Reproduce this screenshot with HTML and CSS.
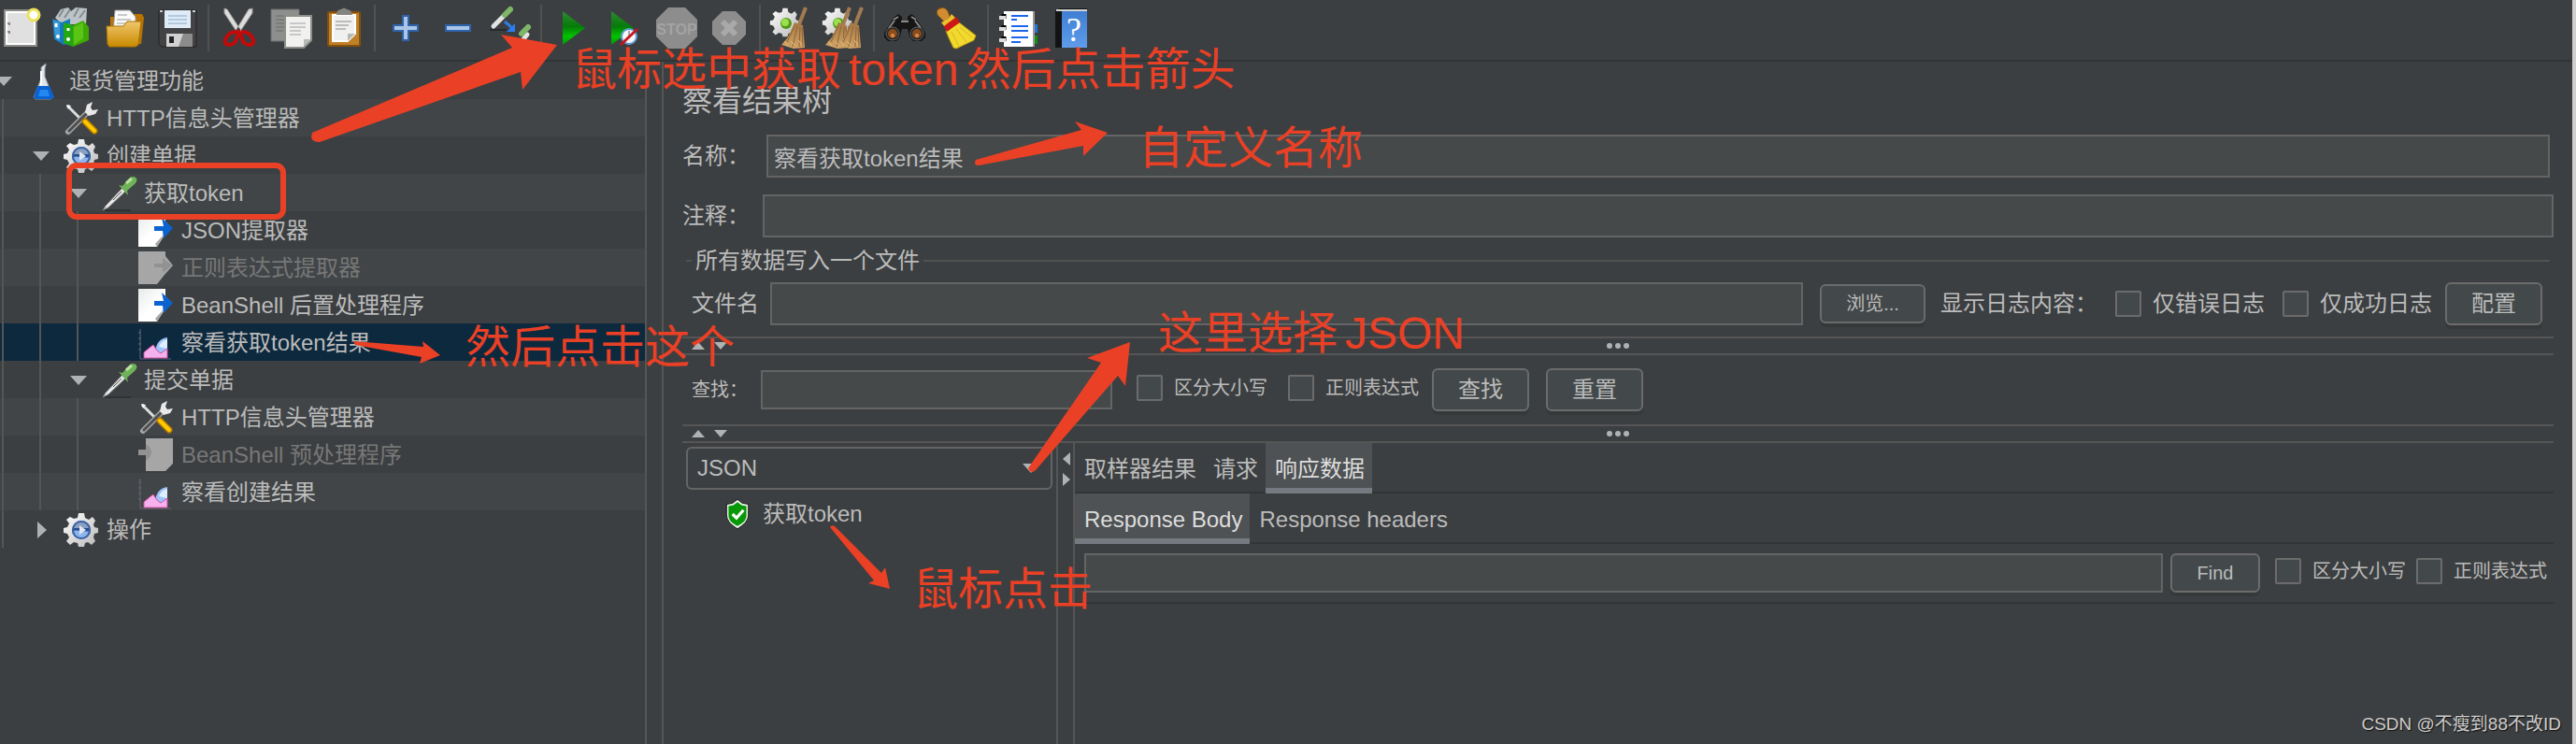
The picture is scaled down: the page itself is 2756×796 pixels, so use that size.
FILE: index.html
```html
<!DOCTYPE html>
<html lang="zh-CN">
<head>
    <meta charset="UTF-8">
    <meta name="viewport" content="width=device-width, initial-scale=1.0">
    <title>察看结果树</title>
    <link rel="stylesheet" href="styles.css">
</head>
<body>
    <!-- shared icons -->
    <svg class="defs" width="0" height="0">
        <defs>
            <linearGradient id="gold" x1="0" y1="0" x2="0" y2="1"><stop offset="0" stop-color="#f0c66c"/><stop offset="1" stop-color="#c98a00"/></linearGradient>
            <linearGradient id="steel" x1="0" y1="0" x2="1" y2="1"><stop offset="0" stop-color="#fff"/><stop offset="1" stop-color="#b8b8b8"/></linearGradient>
            <linearGradient id="green" x1="0" y1="0" x2="0" y2="1"><stop offset="0" stop-color="#2f8a35"/><stop offset=".45" stop-color="#067a08"/><stop offset=".75" stop-color="#00c400"/><stop offset="1" stop-color="#079307"/></linearGradient>
            <linearGradient id="blue" x1="0" y1="0" x2="0" y2="1"><stop offset="0" stop-color="#3f7ed2"/><stop offset="1" stop-color="#5f9ceb"/></linearGradient>
            <linearGradient id="paper" x1="0" y1="0" x2="1" y2="1"><stop offset="0" stop-color="#e8eaea"/><stop offset=".5" stop-color="#fff"/></linearGradient>
            <linearGradient id="straw" x1="0" y1="0" x2="0" y2="1"><stop offset="0" stop-color="#a47745"/><stop offset="1" stop-color="#d2a465"/></linearGradient>
        </defs>
        <symbol id="down" viewBox="0 0 18 10"><path d="M0 0H18L9 10Z" fill="#afb1b3"/></symbol>
        <symbol id="right" viewBox="0 0 10 18"><path d="M0 0L10 9L0 18Z" fill="#afb1b3"/></symbol>
        <symbol id="cog" viewBox="0 0 40 40">
            <path d="M17 2h6l1 5 4 2 4-3 3 4-2 4 1 3 4 1v5l-4 1-1 4 2 4-4 4-4-3-3 1-1 4h-6l-1-4-4-1-4 3-4-4 3-4-2-4-4-1v-5l4-1 2-4-3-4 4-3 4 2 4-1z" fill="url(#steel)"/>
        </symbol>
        <symbol id="flask" viewBox="0 0 40 40">
            <path d="M17 5l5-4v2l-1 3v9l9 22-3 2H11l-2-2 8-20z" fill="#dfe4ea" stroke="#8d949d"/>
            <path d="M13 25h13l5 12-3 2H11l-2-2z" fill="#0b63cf"/>
            <path d="M16 29h8l2 7H14z" fill="#2388f2"/>
            <path d="M17 9v15" stroke="#fff" stroke-width="2"/>
        </symbol>
        <symbol id="tools" viewBox="0 0 40 40">
            <path d="M5 6L22 23" stroke="#ddd" stroke-width="3"/>
            <path d="M4 5l5 1-3 4z" fill="#f5f5f5"/>
            <path d="M6 34L26 14" stroke="#a6a6a6" stroke-width="6" stroke-linecap="round"/>
            <path d="M7 33L25 15" stroke="#4e4e4e" stroke-width="3" stroke-linecap="round"/>
            <path d="M24 13l2-8 6-3-2 6 2 3 6-1-3 5-7 2z" fill="#e9e9e9"/>
            <path d="M24 23L34 33" stroke="#b47c00" stroke-width="7" stroke-linecap="round"/>
            <path d="M24 23L34 33" stroke="#ffc800" stroke-width="4" stroke-linecap="round"/>
        </symbol>
        <symbol id="group" viewBox="0 0 40 40">
            <use href="#cog"/>
            <circle cx="20" cy="20" r="10" fill="#244c8f"/><path d="M11 21a9 9 0 0018 0c-5 2-13-2-18 0" fill="#8fb6ec"/><path d="M12 18a8 8 0 0116 0z" fill="#8b9fbf"/>
            <circle cx="20" cy="20" r="9" fill="none" stroke="#3b64a6" stroke-width="2"/>
            <path d="M18 15L25 20L18 25Z" fill="#dfe7f1"/>
        </symbol>
        <symbol id="dropper" viewBox="0 0 40 40">
            <path d="M5 38h28" stroke="#2f3133" stroke-width="2"/>
            <path d="M24 14L6 33l-3 5 6-3L27 18z" fill="#e8e8e8" stroke="#777"/>
            <path d="M14 27l9-9" stroke="#555"/>
            <path d="M20 11l4 1 8-9c3-2 6-1 7 1s0 4-2 6l-8 7 1 5z" fill="#6fb259"/>
            <path d="M28 9l6-5" stroke="#b9e2a0" stroke-width="3"/>
        </symbol>
        <symbol id="post" viewBox="0 0 40 40">
            <path d="M1 2H30v8l7 7-9 9-7 11H1V2z" fill="url(#paper)"/>
            <path d="M30 22L21 37 19 34z" fill="#a5a5a5"/>
            <path d="M18 15h10l-2-9 12 11-10 11-1-8h-9z" fill="#0b63cf"/>
        </symbol>
        <symbol id="post-off" viewBox="0 0 40 40">
            <path d="M1 2H30v5l8 10-9 10-8 10H1z" fill="#a6a6a6"/>
            <path d="M18 15h9V9l10 8-10 8v-6h-9z" fill="#929292"/>
        </symbol>
        <symbol id="pre-off" viewBox="0 0 40 40">
            <path d="M9 2H38V29L30 37H9V20H1v-6h8z" fill="#a6a6a6"/>
            <path d="M9 8q6 4 6 9t-6 9v-6H1v-6h8z" fill="#929292"/>
        </symbol>
        <symbol id="chart" viewBox="0 0 40 40">
            <path d="M3 5V37H36" fill="none" stroke="#667" stroke-width="1"/>
            <path d="M1 9h3M1 15h3M1 21h3M1 27h3" stroke="#667"/>
            <path d="M20 36V24q3-9 12-10V36z" fill="#9cc4f8"/><path d="M23 24q3-7 9-8v10z" fill="#deeeff"/>
            <path d="M7 36V30l6-5 4-3 4 6 4 3 7-5V36z" fill="#f5b0ee" stroke="#d052a4"/>
        </symbol>
        <symbol id="shield" viewBox="0 0 32 32">
            <path d="M16 1l5 4 6 1v11c0 6-4 10-11 14C9 27 5 23 5 17V6l6-1z" fill="#e8efe8" stroke="#222" />
            <path d="M16 4l4 3 5 1v9c0 5-3 8-9 11-6-3-9-6-9-11V8l5-1z" fill="#069806"/>
            <path d="M11 16l4 4 7-8" fill="none" stroke="#fff" stroke-width="3"/>
        </symbol>
        <symbol id="cog-clear" viewBox="0 0 56 64">
            <use href="#cog" x="5" y="7" width="34" height="34"/>
            <circle cx="23" cy="25" r="6" fill="#4f9a18"/><circle cx="22" cy="24" r="4" fill="#9be04e"/>
        </symbol>
        <symbol id="besom" viewBox="0 0 30 46">
            <path d="M20 19L27 1" stroke="#a17b50" stroke-width="4"/>
            <path d="M15 17l9 3 2 24-12 1-13-4 7-8z" fill="url(#straw)"/>
            <path d="M15 21L7 38M18 21l-5 22M21 22l-1 21M23 22l1 21" stroke="#8d6438"/>
            <path d="M4 37l4 5M11 37l5 5M19 36l4 5" stroke="#e3bd81"/>
        </symbol>
    </svg>

    <div class="app">
        <div class="toolbar">
            <button type="button" class="tool" aria-label="新建">
                <svg viewBox="0 0 56 64"><rect x="11" y="11" width="34" height="38" fill="#e0e0e1" stroke="#8b8c88" stroke-width="2"/><rect x="13" y="13" width="30" height="34" fill="none" stroke="#fff" stroke-width="2"/><path d="M14 25h2v2M14 34h2v2" stroke="#888" stroke-width="2" fill="none"/><circle cx="42" cy="16" r="6" fill="#fff" stroke="#ece25a" stroke-width="3"/></svg>
            </button>
            <button type="button" class="tool" aria-label="模板">
                <svg viewBox="0 0 56 64"><path d="M9 19l6-9 8-2 3 4 5-4 12 1-1 17H16z" fill="#bcc4c7"/><path d="M13 18l5-8M19 19l6-9M29 18l5-9M35 19l6-8" stroke="#858d91" stroke-width="2"/><path d="M6 20l10 4 9-4v27l-7 1-10-6z" fill="#1479bd"/><path d="M7 21l7 3v20l-5-3z" fill="#3c9cda"/><path d="M18 24l10 3v23l-10-4z" fill="#22a713"/><path d="M28 27l11-5 6 7v14L28 50z" fill="#3faa06"/><path d="M29 29l10-5v17l-10 7z" fill="#5bc515"/><path d="M10 25v4M23 30v3" stroke="#fff" stroke-width="3"/><circle cx="12" cy="39" r="2" fill="#fff"/><circle cx="23" cy="42" r="2" fill="#fff"/></svg>
            </button>
            <button type="button" class="tool" aria-label="打开">
                <svg viewBox="0 0 56 64"><path d="M12 18h7v-3h27l2 4-3 28H12z" fill="#b87400"/><path d="M17 11h16l6 7v16H15z" fill="#fafafa" stroke="#999"/><path d="M20 16h10M19 21h15M19 25h15" stroke="#999"/><path d="M8 28h18l4-5h15l-3 25-3 2H11l-2-3z" fill="url(#gold)" stroke="#a97300"/></svg>
            </button>
            <button type="button" class="tool" aria-label="保存">
                <svg viewBox="0 0 56 64"><path d="M8 11h40v39H11l-3-3z" fill="#434345" stroke="#222"/><path d="M14 11h28v19H14z" fill="#dfebf7"/><path d="M18 17h20M18 21h20M18 25h20" stroke="#86a7c5"/><path d="M16 36h28v14H16z" fill="#d1d1d1"/><path d="M19 39h5v7h-5z" fill="#222"/><path d="M34 36h10v14H29z" fill="#8b8b8b"/><path d="M9 12h3M44 12h3" stroke="#ccc" stroke-width="2"/></svg>
            </button>
            <span class="tool-sep"></span>
            <button type="button" class="tool" aria-label="剪切">
                <svg viewBox="0 0 56 64"><path d="M12 9l3 1 15 23-4 2L12 14zM42 9l-4 1-14 23 4 2 14-21z" fill="#ddd" stroke="#999"/><path d="M26 34q-8 0-11 5c-4 5-2 9 2 9s8-3 8-7l3-6 3 6c0 4 4 7 8 7s6-4 2-9q-3-5-11-5" fill="none" stroke="#c20a0a" stroke-width="4"/></svg>
            </button>
            <button type="button" class="tool" aria-label="复制">
                <svg viewBox="0 0 56 64"><path d="M6 10h30v34H6z" fill="#8c8f8e" stroke="#6c6f6f"/><path d="M11 17h16M11 21h10M11 25h10M11 29h10M11 33h8" stroke="#686b6b"/><path d="M21 17h28v26l-8 8H21z" fill="#f1f1f0" stroke="#8d9089" stroke-width="2"/><path d="M41 50v-8h7z" fill="#b7bab5"/><path d="M26 25h17M26 29h17M26 33h12M26 37h12" stroke="#9d9f9d"/></svg>
            </button>
            <button type="button" class="tool" aria-label="粘贴">
                <svg viewBox="0 0 56 64"><rect x="11" y="13" width="34" height="36" rx="1" fill="#c08028" stroke="#85500c" stroke-width="2"/><path d="M16 16h24v20l-8 8H16z" fill="#f0f0ef" stroke="#fff" stroke-width="2"/><path d="M32 44v-8h8z" fill="#b5b8b4"/><path d="M19 23h17M19 27h14M19 31h11" stroke="#888"/><path d="M20 16q0-6 5-6 3-3 6 0 5 0 6 6z" fill="#858580"/></svg>
            </button>
            <span class="tool-sep"></span>
            <button type="button" class="tool" aria-label="展开">
                <svg viewBox="0 0 56 64"><path d="M25 17h6v10h10v6H31v10h-6V33H15v-6h10z" fill="#a9c6e8" stroke="#2f63ab" stroke-width="2"/></svg>
            </button>
            <button type="button" class="tool" aria-label="折叠">
                <svg viewBox="0 0 56 64"><path d="M15 27h26v6H15z" fill="#a9c6e8" stroke="#2f63ab" stroke-width="2"/></svg>
            </button>
            <button type="button" class="tool" aria-label="切换">
                <svg viewBox="0 0 56 64"><path d="M6 32h18" stroke="#292b2c" stroke-width="2"/><path d="M10 28L21 17M37 48l9-11" stroke="#e2e2e2" stroke-width="5" stroke-linecap="round"/><path d="M22 16l6-6M40 36l7-7" stroke="#7fb568" stroke-width="6" stroke-linecap="round"/><path d="M22 23l7 6" stroke="#2f7de3" stroke-width="3"/><path d="M33 25v9h-9z" fill="#2a7bf0"/></svg>
            </button>
            <span class="tool-sep"></span>
            <button type="button" class="tool" aria-label="启动">
                <svg viewBox="0 0 56 64"><path d="M18 12L42 30L18 48Z" fill="url(#green)"/></svg>
            </button>
            <button type="button" class="tool" aria-label="不停顿开始">
                <svg viewBox="0 0 56 64"><path d="M14 12L38 30L14 48Z" fill="url(#green)"/><circle cx="33" cy="39" r="8" fill="#f3f6fb" stroke="#5f9bd0" stroke-width="2"/><path d="M33 33v6" stroke="#555"/><path d="M24 48L42 31" stroke="#c8141e" stroke-width="3"/></svg>
            </button>
            <button type="button" class="tool" aria-label="停止" disabled>
                <svg viewBox="0 0 56 64"><path d="M19 8h18l13 13v18L37 52H19L6 39V21z" fill="#8d8d8d"/><text x="28" y="37" text-anchor="middle" class="stop-text">STOP</text></svg>
            </button>
            <button type="button" class="tool" aria-label="关闭" disabled>
                <svg viewBox="0 0 56 64"><path d="M21 12h14l11 11v14L35 48H21L10 37V23z" fill="#8d8d8d"/><path d="M21 23l14 14M35 23L21 37" stroke="#a9a9a9" stroke-width="6"/></svg>
            </button>
            <span class="tool-sep"></span>
            <button type="button" class="tool" aria-label="清除">
                <svg viewBox="0 0 56 64"><use href="#cog-clear"/><use href="#besom" x="17" y="7" width="30" height="46"/></svg>
            </button>
            <button type="button" class="tool" aria-label="清除全部">
                <svg viewBox="0 0 56 64"><use href="#cog-clear"/><use href="#besom" x="8" y="7" width="30" height="46"/><use href="#besom" x="21" y="7" width="30" height="46"/></svg>
            </button>
            <span class="tool-sep"></span>
            <button type="button" class="tool" aria-label="查找">
                <svg viewBox="0 0 56 64"><path d="M17 18l4-3 4 3v4h6v-4l4-3 4 3 11 17v5l-4 4h-9l-4-5-2-8h-6l-2 8-4 5h-9l-4-4v-5z" fill="#151515"/><path d="M16 21l5-3M40 21l-5-3M24 23h8M11 30l6-8M45 30l-6-8" stroke="#888" stroke-width="2"/><circle cx="15" cy="36" r="7" fill="#262626" stroke="#666"/><circle cx="41" cy="36" r="7" fill="#262626" stroke="#666"/><circle cx="15" cy="36" r="5" fill="#8a4c1c"/><circle cx="41" cy="36" r="5" fill="#8a4c1c"/><circle cx="15" cy="38" r="2" fill="#d98e4d"/><circle cx="41" cy="38" r="2" fill="#d98e4d"/></svg>
            </button>
            <button type="button" class="tool" aria-label="重置查找">
                <svg viewBox="0 0 56 64"><path d="M7 16q-2-6 3-7 5-2 8 3l3 8-6 4z" fill="#cf8c30" stroke="#8b5512"/><path d="M11 24l8-4 3-5 5 5 2 7-11 6z" fill="#e8c22b"/><path d="M16 33l14-9 18 14-2 5-19 9-3-1q-5-10-8-18z" fill="#f2d92d" stroke="#b89a10"/><path d="M14 28l13-10 4 6-14 10z" fill="#cd1717"/><path d="M22 34l8 16M27 31l11 14M31 29l13 11" stroke="#d5b824" stroke-width="1"/></svg>
            </button>
            <span class="tool-sep"></span>
            <button type="button" class="tool" aria-label="函数助手">
                <svg viewBox="0 0 56 64"><path d="M40 26h8v9h-8z" fill="#2675d8"/><path d="M40 38h8v9h-8z" fill="#128e12"/><path d="M12 12h32v38H12z" fill="#fff"/><path d="M44 12v38" stroke="#999" stroke-width="2"/><path d="M12 15v5M12 27v5M12 39v5" stroke="#000" stroke-width="5"/><path d="M7 19h7M7 31h7M7 43h7" stroke="#ddd" stroke-width="4"/><path d="M20 17h18M20 21h6M20 28h18M20 33h18M20 40h18M20 45h10" stroke="#1c66ee" stroke-width="2"/></svg>
            </button>
            <button type="button" class="tool" aria-label="帮助">
                <svg viewBox="0 0 56 64"><path d="M11 11l5-2h29v42H11z" fill="#131313"/><path d="M12 11h33" stroke="#d4d4d4" stroke-width="2"/><path d="M18 12h27v39H18z" fill="url(#blue)"/><text x="31" y="44" text-anchor="middle" class="help-text">?</text></svg>
            </button>
        </div>

        <div class="workspace">
            <ul class="tree">
                <li class="row"><span class="toggle"><svg class="open"><use href="#down"/></svg></span><svg class="icon"><use href="#flask"/></svg>退货管理功能</li>
                <li class="row"><i class="guide"></i><span class="toggle"></span><svg class="icon"><use href="#tools"/></svg>HTTP信息头管理器</li>
                <li class="row"><i class="guide"></i><span class="toggle"><svg class="open"><use href="#down"/></svg></span><svg class="icon"><use href="#group"/></svg>创建单据</li>
                <li class="row"><i class="guide"></i><i class="guide"></i><span class="toggle"><svg class="open"><use href="#down"/></svg></span><svg class="icon"><use href="#dropper"/></svg>获取token</li>
                <li class="row"><i class="guide"></i><i class="guide"></i><i class="guide"></i><span class="toggle"></span><svg class="icon"><use href="#post"/></svg>JSON提取器</li>
                <li class="row disabled"><i class="guide"></i><i class="guide"></i><i class="guide"></i><span class="toggle"></span><svg class="icon"><use href="#post-off"/></svg>正则表达式提取器</li>
                <li class="row"><i class="guide"></i><i class="guide"></i><i class="guide"></i><span class="toggle"></span><svg class="icon"><use href="#post"/></svg>BeanShell 后置处理程序</li>
                <li class="row selected"><i class="guide"></i><i class="guide"></i><i class="guide"></i><span class="toggle"></span><svg class="icon"><use href="#chart"/></svg>察看获取token结果</li>
                <li class="row"><i class="guide"></i><i class="guide"></i><span class="toggle"><svg class="open"><use href="#down"/></svg></span><svg class="icon"><use href="#dropper"/></svg>提交单据</li>
                <li class="row"><i class="guide"></i><i class="guide"></i><i class="guide"></i><span class="toggle"></span><svg class="icon"><use href="#tools"/></svg>HTTP信息头管理器</li>
                <li class="row disabled"><i class="guide"></i><i class="guide"></i><i class="guide"></i><span class="toggle"></span><svg class="icon"><use href="#pre-off"/></svg>BeanShell 预处理程序</li>
                <li class="row"><i class="guide"></i><i class="guide"></i><i class="guide"></i><span class="toggle"></span><svg class="icon"><use href="#chart"/></svg>察看创建结果</li>
                <li class="row"><i class="guide"></i><span class="toggle"><svg class="closed"><use href="#right"/></svg></span><svg class="icon"><use href="#group"/></svg>操作</li>
            </ul>

            <div class="editor">
                <h1>察看结果树</h1>
                <div class="field-row inset">
                    <label for="name">名称<span class="colon">：</span></label>
                    <input type="text" id="name" value="察看获取token结果">
                </div>
                <div class="field-row">
                    <label for="comment">注释<span class="colon">：</span></label>
                    <input type="text" id="comment">
                </div>
                <fieldset>
                    <legend>所有数据写入一个文件</legend>
                    <div class="file-row">
                        <label for="file" class="file-label">文件名</label>
                        <input type="text" id="file">
                        <button type="button" class="btn small browse">浏览...</button>
                        <span class="log-label">显示日志内容<span class="colon">：</span></span>
                        <label class="check"><input type="checkbox">仅错误日志</label>
                        <label class="check"><input type="checkbox">仅成功日志</label>
                        <button type="button" class="btn config">配置</button>
                    </div>
                </fieldset>

                <div class="splitter">
                    <svg class="arrows" viewBox="0 0 40 8"><path d="M0 8L7 0L14 8Z" fill="#afb1b3"/><path d="M24 0H38L31 8Z" fill="#afb1b3"/></svg>
                    <svg class="dots" viewBox="0 0 26 8"><g fill="#afb1b3"><circle cx="4" cy="4" r="3"/><circle cx="13" cy="4" r="3"/><circle cx="22" cy="4" r="3"/></g></svg>
                </div>

                <div class="search-row">
                    <label for="search">查找<span class="colon">：</span></label>
                    <input type="text" id="search" class="short">
                    <label class="check small"><input type="checkbox">区分大小写</label>
                    <label class="check small"><input type="checkbox">正则表达式</label>
                    <button type="button" class="btn">查找</button>
                    <button type="button" class="btn reset">重置</button>
                </div>

                <div class="splitter">
                    <svg class="arrows" viewBox="0 0 40 8"><path d="M0 8L7 0L14 8Z" fill="#afb1b3"/><path d="M24 0H38L31 8Z" fill="#afb1b3"/></svg>
                    <svg class="dots" viewBox="0 0 26 8"><g fill="#afb1b3"><circle cx="4" cy="4" r="3"/><circle cx="13" cy="4" r="3"/><circle cx="22" cy="4" r="3"/></g></svg>
                </div>

                <div class="results">
                    <div class="samples">
                        <div class="combo">
                            <select aria-label="渲染器"><option>JSON</option></select>
                            <svg viewBox="0 0 18 10"><use href="#down"/></svg>
                        </div>
                        <div class="sample"><svg><use href="#shield"/></svg>获取token</div>
                    </div>
                    <div class="divider">
                        <svg viewBox="0 0 10 36"><path d="M9 0V14L1 7Z" fill="#afb1b3"/><path d="M1 22V36L9 29Z" fill="#afb1b3"/></svg>
                    </div>
                    <div class="response">
                        <div class="tabs">
                            <button type="button" class="tab">取样器结果</button>
                            <button type="button" class="tab">请求</button>
                            <button type="button" class="tab active">响应数据</button>
                        </div>
                        <div class="tabs">
                            <button type="button" class="tab active">Response Body</button>
                            <button type="button" class="tab">Response headers</button>
                        </div>
                        <div class="find-row">
                            <input type="text" class="short" aria-label="Find">
                            <button type="button" class="btn small find">Find</button>
                            <label class="check small"><input type="checkbox">区分大小写</label>
                            <label class="check small"><input type="checkbox">正则表达式</label>
                        </div>
                    </div>
                </div>
            </div>
        </div>

        <!-- notes drawn over the window -->
        <div class="notes">
            <svg width="1300" height="700">
                <rect x="74" y="177" width="229" height="55" rx="8" fill="none" stroke="#ea4025" stroke-width="6"/>
                <g fill="#ea4025">
                    <path d="M334 142L548 51L536 37L596 48L559 96L557 77L342 152Q334 152 333 147Z"/>
                    <path d="M1044 171L1157 139L1150 130L1185 142L1159 167L1159 156L1047 177Q1041 177 1044 171Z"/>
                    <path d="M378 365L453 371L452 365L471 380L449 389L451 382L380 369Z"/>
                    <path d="M1100 501L1178 388L1163 383L1209 366L1204 413L1196 402L1108 503Q1103 508 1100 501Z"/>
                    <path d="M888 564Q890 561 893 563L943 613L947 607L952 630L929 624L935 621Z"/>
                </g>
            </svg>
            <p class="note note-start">鼠标选中获取<span>token</span>然后点击箭头</p>
            <p class="note note-name">自定义名称</p>
            <p class="note note-format">这里选择<span>JSON</span></p>
            <p class="note note-node">然后点击这个</p>
            <p class="note note-click">鼠标点击</p>
            <p class="credit">CSDN @不瘦到88不改ID</p>
        </div>
    </div>
</body>
</html>
```
FILE: styles.css
```css
* {
    box-sizing: border-box;
}

body {
    margin: 0;
    background-color: #3c3f41;
    color: #bbb;
    font-family: "Liberation Sans", "Noto Sans CJK SC", sans-serif;
    font-size: 24px;
    line-height: 30px;
}

input,
button,
select {
    font: inherit;
    color: inherit;
    margin: 0;
}

.defs {
    position: absolute;
}

.app {
    position: relative;
    display: flex;
    flex-direction: column;
    min-height: 100vh;
    overflow: hidden;
    border-right: 4px solid #cfcfcf;
}

/* toolbar */
.toolbar {
    display: flex;
    align-items: center;
    margin-left: -6px;
    border-bottom: 2px solid #323536;
}

.tool {
    width: 56px;
    height: 64px;
    padding: 0;
    border: 0;
    background: none;
}

.tool svg {
    display: block;
    width: 56px;
    height: 64px;
}

.tool-sep {
    width: 2px;
    height: 50px;
    margin: 0 4px 4px;
    background-color: #515151;
}

.stop-text {
    font-size: 16px;
    font-weight: bold;
    fill: #a3a3a3;
}

.help-text {
    font-family: "Liberation Serif", serif;
    font-size: 36px;
    fill: #fff;
}

.workspace {
    display: flex;
    flex: 1;
}

/* test plan tree */
.tree {
    width: 692px;
    margin: 0;
    padding: 0;
    list-style: none;
    border-right: 2px solid #555;
}

.row {
    display: flex;
    align-items: center;
    height: 40px;
    padding-top: 2px;
    white-space: pre;
}

.row:nth-child(even) {
    background-color: #414547;
}

.row.selected {
    background-color: #0d293e;
}

.row.disabled {
    color: #777;
}

.guide {
    width: 40px;
    height: 40px;
    margin-top: -2px;
    background: linear-gradient(#555, #555) 2px 0 / 2px 100% no-repeat;
}

.toggle {
    display: flex;
    width: 27px;
}

.toggle .open {
    width: 18px;
    height: 10px;
    margin-left: -5px;
}

.toggle .closed {
    width: 10px;
    height: 18px;
}

.icon {
    width: 40px;
    height: 40px;
    margin-right: 7px;
}

/* editor panel */
.editor {
    flex: 1;
    display: flex;
    flex-direction: column;
    margin-left: 16px;
    padding: 22px 20px 0;
    border-left: 2px solid #555;
}

h1 {
    margin: 0 0 16px;
    font-size: 32px;
    line-height: 40px;
    font-weight: normal;
}

input[type="text"] {
    flex: 1;
    min-width: 0;
    height: 46px;
    padding: 0 6px;
    border: 2px solid #646464;
    background-color: #45494a;
}

input[type="text"].short {
    height: 42px;
}

/* full-width colon sits in the middle of its box */
.colon {
    font-family: "Noto Sans CJK TC", sans-serif;
    line-height: 1;
}

.field-row {
    display: flex;
    align-items: center;
    margin-bottom: 18px;
}

.field-row label {
    width: 86px;
}

.field-row.inset input {
    margin: 0 4px;
}

fieldset {
    margin: -8px 4px 12px;
    padding: 8px 8px 0 6px;
    border: 0;
    border-top: 2px solid #515151;
}

legend {
    padding: 0 4px;
}

.file-row,
.search-row,
.find-row {
    display: flex;
    align-items: center;
}

.file-label {
    width: 84px;
}

.log-label {
    margin-left: 16px;
}

.check {
    display: flex;
    align-items: center;
    gap: 12px;
    margin-left: 19px;
}

.check.small {
    font-size: 20px;
}

input[type="checkbox"] {
    appearance: none;
    width: 28px;
    height: 28px;
    border: 2px solid #6b6b6b;
    border-radius: 2px;
    background-color: #43494a;
}

.btn {
    width: 104px;
    height: 46px;
    padding: 0;
    border: 2px solid #6b6b6b;
    border-radius: 6px;
    background-color: #43494a;
    box-shadow: 0 4px 0 #36393a;
}

.btn.small {
    height: 42px;
    font-size: 20px;
}

.btn.browse {
    width: 113px;
    margin-left: 18px;
}

.btn.config {
    margin-left: 14px;
}

.splitter {
    display: flex;
    align-items: center;
    height: 20px;
    padding: 0 50px 0 10px;
    border-top: 2px solid #555;
    border-bottom: 2px solid #555;
}

.arrows {
    width: 40px;
    height: 8px;
}

.dots {
    width: 26px;
    height: 8px;
    margin: 0 auto;
}

.search-row {
    height: 74px;
    padding-left: 10px;
}

.search-row > label[for] {
    width: 74px;
    font-size: 20px;
}

.search-row input[type="text"] {
    flex: none;
    width: 376px;
}

.search-row .check {
    margin: 0 -4px 4px 26px;
}

.search-row .btn {
    margin-left: 18px;
}

/* results */
.results {
    display: flex;
    flex: 1;
}

.samples {
    width: 402px;
    padding: 4px 4px 0;
    border-right: 2px solid #555;
}

.combo {
    position: relative;
}

.combo select {
    display: block;
    width: 100%;
    height: 46px;
    padding: 0 10px;
    appearance: none;
    border: 2px solid #646464;
    border-radius: 6px;
    background-color: #3c3f41;
}

.combo svg {
    position: absolute;
    right: 14px;
    top: 18px;
    width: 18px;
    height: 10px;
}

.sample {
    display: flex;
    align-items: center;
    gap: 8px;
    height: 52px;
    padding-left: 36px;
}

.sample svg {
    width: 38px;
    height: 34px;
}

.divider {
    width: 18px;
    padding: 10px 4px;
    border-right: 2px solid #555;
}

.divider svg {
    display: block;
    width: 10px;
    height: 36px;
}

.response {
    flex: 1;
}

.tabs {
    display: flex;
    height: 54px;
    box-shadow: inset 0 -2px #323536;
}

.tab {
    padding: 2px 8px 0 10px;
    border: 0;
    background: none;
}

.tab.active {
    color: #ddd;
    background-color: #4e5254;
    box-shadow: inset 0 -6px #747a80;
}

.find-row {
    padding: 10px 7px 10px 10px;
    border-bottom: 2px solid #323536;
}

.find-row .btn {
    width: 96px;
    margin: 0 5px 0 8px;
}

.find-row .check {
    margin: 0 0 4px 11px;
}

/* notes */
.notes {
    position: absolute;
    inset: 0;
    pointer-events: none;
}

.notes svg {
    display: block;
}

.note {
    position: absolute;
    margin: 0;
    color: #ea4025;
    font-size: 48px;
    line-height: 60px;
    white-space: nowrap;
}

.note span {
    margin: 0 8px;
}

.note-start {
    left: 612px;
    top: 45px;
}

.note-name {
    left: 1218px;
    top: 129px;
}

.note-format {
    left: 1239px;
    top: 327px;
}

.note-node {
    left: 498px;
    top: 342px;
}

.note-click {
    left: 977px;
    top: 601px;
}

.credit {
    position: absolute;
    right: 12px;
    bottom: 6px;
    margin: 0;
    color: #ccc;
    font-size: 19px;
    line-height: 30px;
    text-shadow: 1px 1px 1px #111;
}
```
